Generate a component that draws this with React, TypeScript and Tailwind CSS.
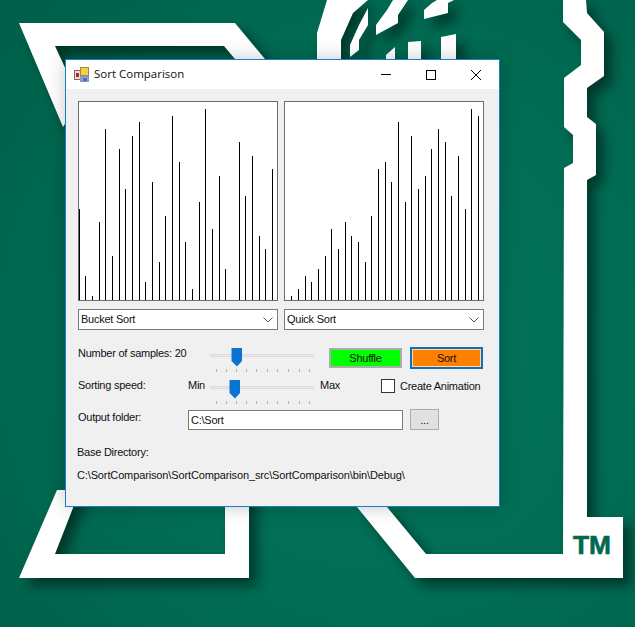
const LEFT_BARS: [number, number][] = [
  [79, 209], [85, 276], [92, 296], [99, 222], [105, 129], [112, 256], [119, 149], [125, 189], [132, 136], [139, 122],
  [145, 282], [152, 182], [159, 262], [165, 216], [172, 116], [179, 162], [185, 242], [192, 289], [199, 202], [205, 109],
  [212, 229], [219, 176], [225, 269], [239, 142], [245, 196], [252, 156], [259, 236], [265, 249], [272, 169],
];

const RIGHT_BARS: [number, number][] = [
  [291, 296], [298, 289], [305, 276], [311, 282], [318, 269], [325, 256], [331, 229], [338, 249], [345, 222], [351, 236],
  [358, 242], [365, 262], [371, 216], [378, 169], [385, 162], [391, 182], [398, 122], [405, 202], [411, 136], [418, 189],
  [425, 176], [431, 149], [438, 129], [445, 142], [451, 196], [458, 156], [465, 209], [471, 109], [478, 116],
];

const TICKS = [6, 16, 26, 36, 46, 57, 67, 78, 89, 99];

function Logo() {
  return (
    <svg className="absolute inset-0" width="635" height="627" viewBox="0 0 635 627">
      <g className="drop-shadow-[8px_8px_6px_rgba(0,0,0,0.45)]" fill="#ffffff">
        <polygon points="19,23 235,23 270,65 240,65 224,46 55,46 80,100 63,127" />
        <polygon points="57,490 19,578 249,578 249,490 225,490 225,554 55,554 80,490" />
        <polygon points="586,0 587,13 604,32 604,76 587,88 587,117 596,124 596,175 587,180 587,517 623,517 623,578 415,578 357,507 387,507 426,554 563,554 564,168 573,163 573,135 564,127 564,78 581,65 581,40 563,22 563,0" />
        <polygon points="327,0 317,33 317,62 341,62 341,40 353,13 368,0" />
        <polygon points="368,8 368,25 359,40 359,50 350,57 350,45 359,25" />
        <polygon points="393,0 408,0 398,15 398,23 376,35 376,25 387,10" />
        <polygon points="437,0 454,0 448,3 448,13 424,19 424,10 432,3" />
        <polygon points="408,42 421,41 421,62 408,62" />
        <polygon points="441,37 456,34 456,62 441,62" />
        <polygon points="386,55 395,47 395,62 386,62" />
      </g>
      <text x="573" y="554" fontSize="25" fontWeight="700" fill="#00684f" stroke="#00684f" strokeWidth="0.6" textLength="38" lengthAdjust="spacingAndGlyphs" fontFamily="'Liberation Sans', sans-serif">
        TM
      </text>
    </svg>
  );
}

function AppIcon() {
  return (
    <svg width="16" height="16" viewBox="0 0 16 16" className="shrink-0">
      <rect x="0.5" y="3.5" width="7" height="9" fill="#e8dcd8" stroke="#9c5a5a" />
      <rect x="2" y="6" width="3" height="4" fill="#b02a2a" />
      <rect x="6.5" y="0.5" width="8" height="8" fill="#f7cf4b" stroke="#a08a3c" />
      <rect x="6.5" y="9.5" width="8" height="5" fill="#8aa4e0" stroke="#8c94b8" />
      <rect x="9" y="11" width="4" height="3" fill="#3f6fd0" />
    </svg>
  );
}

function WindowButtons() {
  return (
    <div className="ml-auto mr-[1px] flex">
      <div className="flex h-[29px] w-[45px] items-center justify-center">
        <svg width="10" height="10" viewBox="0 0 10 10">
          <path d="M0 4.5H10" stroke="#000" fill="none" />
        </svg>
      </div>
      <div className="flex h-[29px] w-[45px] items-center justify-center">
        <svg width="10" height="10" viewBox="0 0 10 10">
          <rect x="0.5" y="0.5" width="9" height="9" stroke="#000" fill="none" />
        </svg>
      </div>
      <div className="flex h-[29px] w-[45px] items-center justify-center">
        <svg width="10" height="10" viewBox="0 0 10 10">
          <path d="M0 0L10 10M10 0L0 10" stroke="#000" fill="none" />
        </svg>
      </div>
    </div>
  );
}

function Chart({ bars, originX }: { bars: [number, number][]; originX: number }) {
  return (
    <div className="h-[200px] w-[200px] border border-[#6d6d6d] bg-white">
      <svg width="198" height="198" viewBox="0 0 198 198" shapeRendering="crispEdges" className="block">
        {bars.map(([x, top]) => (
          <rect key={x} x={x - originX} y={top - 102} width="1" height={300 - top} fill="#000" />
        ))}
      </svg>
    </div>
  );
}

function Dropdown({ label }: { label: string }) {
  return (
    <div className="flex h-[21px] w-[200px] items-center border border-[#7a7a7a] bg-white pl-[2px] pr-[3px]">
      <span className="mb-[2px]">{label}</span>
      <svg width="10" height="6" viewBox="0 0 10 6" className="ml-auto mr-[1px]">
        <path d="M0.5 0.5L5 5L9.5 0.5" stroke="#555" fill="none" />
      </svg>
    </div>
  );
}

function Slider({ thumb }: { thumb: number }) {
  return (
    <div className="relative h-[26px] w-[104px]">
      <div className="absolute left-0 top-[6px] h-[3px] w-[104px] border-y border-[#dcdcdc] bg-[#e8e8e8]" />
      <svg width="12" height="19" viewBox="0 0 12 19" className="absolute top-0" style={{ left: thumb }}>
        <path d="M0.5 0H11V13L6 18.5L0.5 13Z" fill="#0a74d4" />
      </svg>
      {TICKS.map((t) => (
        <div key={t} className="absolute top-[21px] h-[3px] w-px bg-[#b0b0b0]" style={{ left: t }} />
      ))}
    </div>
  );
}

export default function App() {
  return (
    <div className="relative h-[627px] w-[635px] overflow-hidden bg-[radial-gradient(circle_at_60%_55%,#05755b_0%,#006d54_50%,#005f49_100%)]">
      <Logo />
      <div className="absolute left-[65px] top-[59px] flex h-[448px] w-[435px] flex-col border border-[#1b7fc4] bg-[#f0f0f0] font-['Liberation_Sans',sans-serif] text-[11px] leading-[14px] tracking-[-0.25px] text-[#111] shadow-[0_0_18px_rgba(0,0,0,0.22)]">
        <div className="flex h-[29px] items-center bg-white pl-[8px]">
          <AppIcon />
          <span className="mb-[2px] ml-[4px] font-['Open_Sans',sans-serif] text-[11.5px] tracking-normal">Sort Comparison</span>
          <WindowButtons />
        </div>

        <div className="flex flex-col pl-[12px] pt-[12px]">
          <div className="flex gap-[6px]">
            <Chart bars={LEFT_BARS} originX={79} />
            <Chart bars={RIGHT_BARS} originX={285} />
          </div>
          <div className="mt-[8px] flex gap-[6px]">
            <Dropdown label="Bucket Sort" />
            <Dropdown label="Quick Sort" />
          </div>

          <div className="mt-[17px] flex h-[32px] items-start">
            <span className="mt-[-1px] w-[132px]">Number of samples: 20</span>
            <div className="mt-[1px]">
              <Slider thumb={21} />
            </div>
            <div className="ml-[15px] mt-[1px] flex h-[20px] w-[73px] items-center justify-center border-2 border-[#adadad] bg-[#00ff00]">
              Shuffle
            </div>
            <div className="ml-[8px] flex h-[22px] w-[73px] items-center justify-center border-2 border-[#0f6fb8] bg-[#ff7f00] outline outline-1 -outline-offset-3 outline-[#ffd9a8]">
              Sort
            </div>
          </div>

          <div className="flex h-[30px] items-start">
            <span className="mt-[-1px] w-[110px]">Sorting speed:</span>
            <span className="mt-[-1px] w-[22px]">Min</span>
            <div className="mt-[1px]">
              <Slider thumb={19} />
            </div>
            <span className="ml-[6px] mt-[-1px] w-[61px]">Max</span>
            <div className="h-[14px] w-[14px] border border-[#333] bg-white" />
            <span className="ml-[5px]">Create Animation</span>
          </div>

          <div className="flex items-center">
            <span className="mb-[6px] w-[110px]">Output folder:</span>
            <div className="flex h-[20px] w-[215px] items-center border border-[#7a7a7a] bg-white pl-[2px]">C:\Sort</div>
            <div className="ml-[7px] flex h-[21px] w-[29px] items-center justify-center border border-[#adadad] bg-[#e1e1e1]">...</div>
          </div>

          <span className="ml-[-1px] mt-[15px]">Base Directory:</span>
          <span className="ml-[-1px] mt-[9px] tracking-[-0.13px]">C:\SortComparison\SortComparison_src\SortComparison\bin\Debug\</span>
        </div>
      </div>
    </div>
  );
}
